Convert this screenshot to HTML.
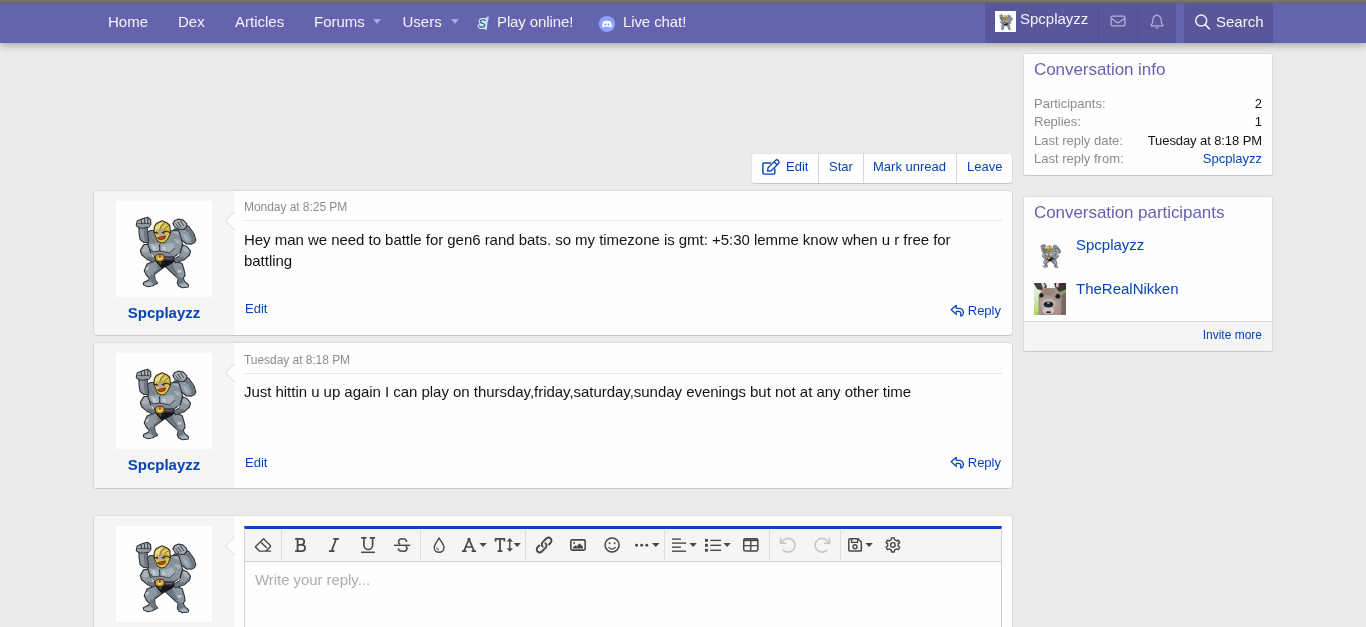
<!DOCTYPE html>
<html>
<head>
<meta charset="utf-8">
<title>Conversation</title>
<style>
*{box-sizing:border-box;margin:0;padding:0}
html,body{width:1366px;height:627px;overflow:hidden;background:#ebebeb;font-family:"Liberation Sans",sans-serif;font-size:15px;color:#141414}
a{text-decoration:none;color:#0645b8}
.abs{position:absolute}
#topline{left:0;top:0;width:1366px;height:3px;background:linear-gradient(#78746b 0,#78746b 60%,#5c5953 100%)}
#nav{left:0;top:3px;width:1366px;height:40px;background:#6463ae;box-shadow:0 2px 8px rgba(0,0,0,.32)}
.nl{position:absolute;top:0;height:40px;line-height:38px;color:#f3f3fa;font-size:15px;white-space:nowrap}
.caret{position:absolute;top:16px;width:0;height:0;border-left:4.5px solid transparent;border-right:4.5px solid transparent;border-top:5px solid #a9a8d6}
.dark{position:absolute;top:0;height:40px;background:#58579a}
.block{position:absolute;background:#fefefe;border:1px solid #d8d8d8;border-color:#dedede #d8d8d8 #c9c9c9 #d8d8d8;border-radius:3px}
.side-title{position:absolute;left:10px;font-size:17px;color:#6463ae;white-space:nowrap;letter-spacing:-0.06px}
.kv{position:absolute;left:10px;right:10px;font-size:13px;height:18px;line-height:18px;white-space:nowrap}
.kv .k{position:absolute;left:0;color:#8c8c8c}
.kv .v{position:absolute;right:0;color:#141414}
.msg{position:absolute;left:93px;width:920px;background:#fefefe;border:1px solid #d8d8d8;border-color:#dcdcdc #d8d8d8 #cacaca #d8d8d8;border-radius:4px;overflow:hidden}
.msg .user{position:absolute;left:0;top:0;bottom:0;width:140px;background:#f5f5f5}
.msg .av{position:absolute;left:22px;top:10px;width:96px;height:96px;background:#fefefe}
.msg .uname{position:absolute;left:0;width:140px;top:112px;text-align:center;font-weight:bold;font-size:15px;color:#0645b8;line-height:20px}
.msg .date{position:absolute;left:150px;top:8px;font-size:12px;color:#8c8c8c;line-height:16px;white-space:nowrap;letter-spacing:-0.05px}
.msg .hr{position:absolute;left:150px;right:10px;top:29px;height:1px;background:#e7e7e7}
.msg .body{position:absolute;left:150px;top:38px;width:740px;font-size:15px;line-height:21px;color:#141414;letter-spacing:-0.033px}
.msg .act{position:absolute;font-size:13px;color:#0645b8;line-height:18px;white-space:nowrap}
.arrow{position:absolute;left:131px;top:20px;width:0;height:0;border-top:10px solid transparent;border-bottom:10px solid transparent;border-right:10px solid #d8d8d8}
.arrow:after{content:"";position:absolute;left:1px;top:-9px;border-top:9px solid transparent;border-bottom:9px solid transparent;border-right:9px solid #fefefe}
.ricon{position:absolute;right:47px;width:15px;height:13px}
</style>
</head>
<body>
<div id="wrap" style="position:absolute;left:0;top:0;width:1366px;height:627px;will-change:transform;overflow:hidden">
<svg width="0" height="0" style="position:absolute"><defs><symbol id="mc" viewBox="0 0 96 96"><rect width="96" height="96" fill="#fefefe"/><polygon points="23.0,26.7 31.1,26.1 31.9,31.5 34.0,29.9 37.8,32.1 33.3,41.1 27.6,41.4 24.1,38.5 23.1,32.1" fill="#8d979f" stroke="#2b2e34" stroke-width="1.1" stroke-linejoin="round"/><polygon points="27.6,27.7 31.1,26.7 31.7,31.8 34.0,30.5 36.8,32.5 33.0,40.4 28.8,40.4 28.2,34.1" fill="#6c747d" stroke="none" stroke-width="0" stroke-linejoin="round"/><polygon points="58.8,28.0 68.4,28.3 71.3,24.8 73.0,25.8 78.0,32.8 79.9,39.2 78.3,41.8 75.4,43.1 70.3,43.0 65.2,38.5 62.7,34.1 56.3,30.2" fill="#8d979f" stroke="#2b2e34" stroke-width="1.1" stroke-linejoin="round"/><polygon points="69.1,29.0 72.2,26.4 77.7,33.1 79.4,39.2 78.0,41.4 75.4,42.5 75.4,37.3 72.9,32.1" fill="#6c747d" stroke="none" stroke-width="0" stroke-linejoin="round"/><polygon points="66.5,32.1 70.3,34.1 72.9,38.5 71.6,41.1 68.4,37.3" fill="#a6b1b9" stroke="none" stroke-width="0" stroke-linejoin="round"/><polygon points="20.2,24.5 21.2,20.0 26.3,17.8 31.4,16.2 34.6,18.7 34.9,23.2 32.7,26.1 27.6,26.9 23.1,26.7" fill="#a6b1b9" stroke="#2b2e34" stroke-width="1.1" stroke-linejoin="round"/><polygon points="21.8,23.8 27.6,22.6 34.0,23.2 32.6,25.8 27.6,26.5 23.4,26.3" fill="#8d979f" stroke="none" stroke-width="0" stroke-linejoin="round"/><polyline points="25.0,18.7 25.7,22.6" fill="none" stroke="#2b2e34" stroke-width="0.9" stroke-linecap="round" stroke-linejoin="round"/><polyline points="28.5,17.8 28.8,22.6" fill="none" stroke="#2b2e34" stroke-width="0.9" stroke-linecap="round" stroke-linejoin="round"/><polyline points="31.7,17.8 31.7,22.6" fill="none" stroke="#2b2e34" stroke-width="0.9" stroke-linecap="round" stroke-linejoin="round"/><polyline points="21.8,22.6 34.0,22.3" fill="none" stroke="#2b2e34" stroke-width="0.7" stroke-linecap="round" stroke-linejoin="round"/><polygon points="56.9,22.6 58.8,19.4 62.7,18.1 67.1,19.1 70.6,22.6 71.0,25.1 68.4,28.0 63.9,28.3 59.5,27.0" fill="#a6b1b9" stroke="#2b2e34" stroke-width="1.1" stroke-linejoin="round"/><polygon points="57.9,23.8 62.7,25.8 68.4,27.4 64.1,28.1 59.8,26.7" fill="#8d979f" stroke="none" stroke-width="0" stroke-linejoin="round"/><polyline points="62.0,21.3 65.2,25.8" fill="none" stroke="#2b2e34" stroke-width="0.9" stroke-linecap="round" stroke-linejoin="round"/><polyline points="64.6,20.3 67.8,24.8" fill="none" stroke="#2b2e34" stroke-width="0.9" stroke-linecap="round" stroke-linejoin="round"/><polyline points="59.8,22.6 62.7,26.7" fill="none" stroke="#2b2e34" stroke-width="0.7" stroke-linecap="round" stroke-linejoin="round"/><polygon points="39.7,59.5 46.1,67.5 38.5,73.3 39.2,79.0 41.7,82.1 36.6,84.7 31.5,85.7 27.6,83.8 27.3,81.7 32.6,79.1 33.3,77.1 30.6,74.5 28.2,69.7 31.1,62.9" fill="#8d979f" stroke="#2b2e34" stroke-width="1.1" stroke-linejoin="round"/><polygon points="34.0,73.6 38.3,73.6 38.9,79.0 41.3,81.9 37.1,83.8 34.3,79.0 34.0,76.4" fill="#6c747d" stroke="none" stroke-width="0" stroke-linejoin="round"/><polygon points="29.8,66.5 33.0,65.7 32.6,68.1 29.5,69.4" fill="#c4cfd7" stroke="none" stroke-width="0" stroke-linejoin="round"/><polygon points="39.1,61.8 45.1,67.5 39.1,72.3 37.1,72.0 42.3,67.5" fill="#6c747d" stroke="none" stroke-width="0" stroke-linejoin="round"/><polygon points="27.9,81.9 32.7,80.9 37.1,82.2 36.2,84.2 31.5,85.2 28.1,83.6" fill="#a6b1b9" stroke="none" stroke-width="0" stroke-linejoin="round"/><polygon points="58.2,59.5 66.2,62.7 68.4,70.1 69.1,74.5 67.3,77.1 68.5,80.4 72.6,84.0 72.1,86.0 66.6,86.7 62.8,84.9 61.3,82.2 62.2,77.4 58.8,74.5 49.3,65.7 56.3,61.8" fill="#8d979f" stroke="#2b2e34" stroke-width="1.1" stroke-linejoin="round"/><polygon points="59.8,74.8 66.8,77.2 68.1,80.4 63.9,83.5 61.8,82.1 62.5,77.6" fill="#6c747d" stroke="none" stroke-width="0" stroke-linejoin="round"/><polygon points="61.7,69.3 65.4,69.3 65.4,71.5 61.7,71.5" fill="#c4cfd7" stroke="none" stroke-width="0" stroke-linejoin="round"/><polygon points="50.5,65.7 56.3,62.7 58.8,68.1 62.7,74.5 59.5,74.2" fill="#6c747d" stroke="none" stroke-width="0" stroke-linejoin="round"/><polygon points="63.9,83.8 68.4,82.2 72.1,84.2 71.7,85.6 66.8,86.2" fill="#a6b1b9" stroke="none" stroke-width="0" stroke-linejoin="round"/><polygon points="31.7,31.6 34.0,29.7 38.4,29.3 54.4,30.1 56.3,29.7 62.7,29.7 65.5,38.5 66.5,43.8 63.9,52.1 58.8,55.3 57.6,58.1 39.7,58.1 38.4,55.3 34.6,51.4 31.4,43.8 32.8,41.1" fill="#8d979f" stroke="#2b2e34" stroke-width="1.1" stroke-linejoin="round"/><polygon points="32.4,32.1 34.3,30.5 38.1,30.1 39.7,35.3 41.6,40.4 37.1,43.0 33.3,41.1" fill="#7b848c" stroke="none" stroke-width="0" stroke-linejoin="round"/><polygon points="54.7,32.1 58.8,30.9 62.7,31.5 64.6,38.5 62.0,38.5 56.3,39.8 51.8,38.5" fill="#858f97" stroke="none" stroke-width="0" stroke-linejoin="round"/><polygon points="56.3,30.5 62.0,30.4 63.3,34.1 58.8,32.8" fill="#a6b1b9" stroke="none" stroke-width="0" stroke-linejoin="round"/><polygon points="34.9,43.1 41.6,43.8 43.4,49.5 37.1,50.9 34.3,47.7" fill="#a6b1b9" stroke="none" stroke-width="0" stroke-linejoin="round"/><polygon points="44.8,44.4 56.3,41.8 58.8,47.0 53.7,51.5 45.4,50.3" fill="#a6b1b9" stroke="none" stroke-width="0" stroke-linejoin="round"/><polygon points="36.4,43.8 39.8,46.3 39.8,49.0 37.1,48.4" fill="#c4cfd7" stroke="none" stroke-width="0" stroke-linejoin="round"/><polygon points="46.1,45.4 48.8,46.3 50.0,49.0 46.8,48.2" fill="#c4cfd7" stroke="none" stroke-width="0" stroke-linejoin="round"/><polygon points="57.6,38.1 62.7,38.5 65.2,42.0 62.0,42.6" fill="#a6b1b9" stroke="none" stroke-width="0" stroke-linejoin="round"/><polygon points="39.4,52.2 58.3,52.2 57.6,56.5 40.0,56.5" fill="#808a92" stroke="none" stroke-width="0" stroke-linejoin="round"/><polyline points="43.5,43.8 43.8,50.1" fill="none" stroke="#2b2e34" stroke-width="0.9" stroke-linecap="round" stroke-linejoin="round"/><polyline points="34.5,47.9 37.1,51.1 43.5,50.1 45.4,50.5 53.7,51.7 58.8,47.3" fill="none" stroke="#2b2e34" stroke-width="0.8" stroke-linecap="round" stroke-linejoin="round"/><polygon points="27.6,43.8 31.7,43.1 34.7,51.4 38.5,56.0 39.7,59.1 36.5,61.1 31.4,58.6 25.5,53.5 24.3,49.5" fill="#8d979f" stroke="#2b2e34" stroke-width="1.1" stroke-linejoin="round"/><polygon points="28.2,44.7 31.1,44.1 33.0,49.5 29.5,52.1 25.7,50.1" fill="#a6b1b9" stroke="none" stroke-width="0" stroke-linejoin="round"/><polygon points="30.8,55.3 37.1,56.5 39.4,59.1 36.5,60.7 31.7,58.1" fill="#6c747d" stroke="none" stroke-width="0" stroke-linejoin="round"/><polygon points="66.5,43.8 71.0,45.7 74.5,50.1 73.5,54.0 67.8,59.1 59.5,61.8 57.6,58.6 62.7,55.3 64.1,52.1" fill="#8d979f" stroke="#2b2e34" stroke-width="1.1" stroke-linejoin="round"/><polygon points="67.5,44.7 70.6,46.3 73.6,50.3 70.3,52.1 67.1,48.9" fill="#a6b1b9" stroke="none" stroke-width="0" stroke-linejoin="round"/><polygon points="62.7,55.9 68.4,56.5 67.5,58.8 59.8,61.1 58.2,58.8" fill="#6c747d" stroke="none" stroke-width="0" stroke-linejoin="round"/><polygon points="34.8,51.8 37.1,56.0 38.2,55.3 35.5,52.1" fill="#fefefe" stroke="none" stroke-width="0" stroke-linejoin="round"/><polygon points="64.1,52.3 62.7,55.1 61.5,54.7 63.0,52.4" fill="#fefefe" stroke="none" stroke-width="0" stroke-linejoin="round"/><polygon points="39.7,59.2 58.2,59.2 56.3,61.8 49.3,65.7 46.1,67.5 42.9,63.8" fill="#15151a" stroke="#15151a" stroke-width="0.8" stroke-linejoin="round"/><polygon points="42.1,61.1 46.2,61.1 44.5,64.1" fill="#514a66" stroke="none" stroke-width="0" stroke-linejoin="round"/><polygon points="39.4,55.8 57.6,55.8 57.2,59.1 39.7,59.1" fill="#1b1b20" stroke="#1b1b20" stroke-width="0.6" stroke-linejoin="round"/><polygon points="48.6,56.3 57.1,56.3 56.8,58.7 48.6,58.7" fill="#4a4560" stroke="none" stroke-width="0" stroke-linejoin="round"/><ellipse cx="50.1" cy="57.5" rx="0.4" ry="0.4" fill="#d8c050" stroke="none" stroke-width="0"/><ellipse cx="52.0" cy="57.5" rx="0.4" ry="0.4" fill="#d8c050" stroke="none" stroke-width="0"/><ellipse cx="53.9" cy="57.5" rx="0.4" ry="0.4" fill="#d8c050" stroke="none" stroke-width="0"/><ellipse cx="55.8" cy="57.5" rx="0.4" ry="0.4" fill="#d8c050" stroke="none" stroke-width="0"/><ellipse cx="43.8" cy="56.8" rx="4.5" ry="3.6" fill="#d6b93f" stroke="#3e300c" stroke-width="1.0"/><ellipse cx="43.8" cy="57.2" rx="2.6" ry="2.0" fill="#f0dc78" stroke="#a08420" stroke-width="0.6"/><polygon points="43.0,53.5 44.8,53.5 44.7,57.0 43.1,57.0" fill="#e03228" stroke="none" stroke-width="0" stroke-linejoin="round"/><polygon points="37.9,31.5 38.3,25.8 40.3,22.6 46.1,19.8 51.2,21.9 53.9,24.5 54.2,29.6 54.5,32.1 51.8,37.4 48.8,41.1 45.4,42.0 41.6,39.9 39.6,34.7" fill="#c6af42" stroke="#3a3214" stroke-width="1.1" stroke-linejoin="round"/><polygon points="39.1,30.9 39.4,25.8 41.6,23.2 46.1,20.8 48.0,21.6 44.8,24.5 43.2,29.6 41.3,27.7 40.0,30.9" fill="#e8db86" stroke="none" stroke-width="0" stroke-linejoin="round"/><polygon points="46.1,25.8 49.9,23.2 53.0,25.1 53.2,30.2 51.2,27.7 48.6,30.2" fill="#dccb66" stroke="none" stroke-width="0" stroke-linejoin="round"/><polyline points="43.5,31.2 44.5,25.8 48.0,21.9" fill="none" stroke="#6e6024" stroke-width="0.8" stroke-linecap="round" stroke-linejoin="round"/><polyline points="48.0,31.2 49.3,26.7 52.8,24.8" fill="none" stroke="#6e6024" stroke-width="0.8" stroke-linecap="round" stroke-linejoin="round"/><polygon points="41.1,30.1 46.6,30.1 51.2,32.1 48.0,33.5 43.5,34.6 40.8,33.5" fill="#a1abb3" stroke="none" stroke-width="0" stroke-linejoin="round"/><polygon points="38.7,32.1 41.0,34.1 43.5,35.0 48.0,34.1 53.7,32.1 51.7,37.1 48.8,40.7 45.4,41.6 41.9,39.5 39.8,34.6" fill="#d9c84c" stroke="none" stroke-width="0" stroke-linejoin="round"/><polygon points="41.7,36.7 49.4,34.8 48.8,37.6 44.8,38.7 42.5,38.1" fill="#e83a2c" stroke="#45200e" stroke-width="0.8" stroke-linejoin="round"/><ellipse cx="40.3" cy="31.6" rx="1.1" ry="1.1" fill="#d81e1e" stroke="none" stroke-width="0"/><ellipse cx="47.6" cy="31.9" rx="1.2" ry="1.1" fill="#d81e1e" stroke="none" stroke-width="0"/><polyline points="38.3,31.4 41.7,32.1" fill="none" stroke="#2a2410" stroke-width="1.0" stroke-linecap="round" stroke-linejoin="round"/><polyline points="46.1,31.5 51.2,30.1 53.7,31.6" fill="none" stroke="#2a2410" stroke-width="1.0" stroke-linecap="round" stroke-linejoin="round"/></symbol>
<symbol id="rep" viewBox="0 0 15 13"><path d="M1.2 5.8 L6.2 1.3 V4.4 H8.6 C11.4 4.4 13.4 6 13.4 8.4 C13.4 10 12.4 11.3 11.4 12 C10.8 12.3 10.3 11.7 10.6 11.2 C11.4 9 10.6 7.3 8.2 7.3 H6.2 V10.4 Z" fill="none" stroke="#0645b8" stroke-width="1.25" stroke-linejoin="round"/></symbol>
</defs></svg>
<div class="abs" id="nav">
  <a class="nl" style="left:108px">Home</a>
  <a class="nl" style="left:178px">Dex</a>
  <a class="nl" style="left:235px">Articles</a>
  <a class="nl" style="left:314px">Forums</a><i class="caret" style="left:373px"></i>
  <a class="nl" style="left:402.5px">Users</a><i class="caret" style="left:451px"></i>
  <a class="nl" style="left:497px;letter-spacing:-0.11px">Play online!</a>
  <a class="nl" style="left:623px;letter-spacing:-0.1px">Live chat!</a>
  <!-- PS icon -->
  <svg class="abs" style="left:476px;top:11px" width="16" height="18" viewBox="0 0 16 18"><polygon points="10,3 13,2.6 11.6,9 10.8,16 8,15.6" fill="#b4d8e8"/><text x="2.3" y="14.4" textLength="8" lengthAdjust="spacingAndGlyphs" font-family="Liberation Sans" font-weight="bold" font-style="italic" font-size="13.5" fill="#2a78b2" stroke="#fdfdfd" stroke-width="1.9" paint-order="stroke" stroke-linejoin="round">S</text></svg>
  <!-- discord -->
  <svg class="abs" style="left:598px;top:12px" width="18" height="18" viewBox="0 0 18 18"><circle cx="9" cy="9" r="8.1" fill="#8ea1fb"/><path d="M5.3 6.4 Q9 5.2 12.7 6.4 Q14.2 9 14 11.8 Q12.8 12.7 11.6 12.6 L11 11.6 Q9 12.1 7 11.6 L6.4 12.6 Q5.2 12.7 4 11.8 Q3.8 9 5.3 6.4Z" fill="#fcfcff"/><circle cx="7.5" cy="9.4" r="0.9" fill="#7289f0"/><circle cx="10.5" cy="9.4" r="0.9" fill="#7289f0"/></svg>
  <div class="dark" style="left:985px;width:191px"></div>
  <i class="abs" style="left:1098px;top:0;width:1px;height:40px;background:#515090"></i>
  <i class="abs" style="left:1137px;top:0;width:1px;height:40px;background:#515090"></i>
  <div class="dark" style="left:1184px;width:89px;border-radius:4px 4px 0 0"></div>
  <svg class="abs" style="left:995px;top:8px" width="21" height="21"><use href="#mc"/></svg>
  <a class="nl" style="left:1020px;top:-3px">Spcplayzz</a>
  <!-- envelope -->
  <svg class="abs" style="left:1109px;top:11px" width="18" height="14" viewBox="0 0 18 14"><rect x="2.1" y="2.1" width="13.8" height="9.8" rx="1.4" fill="none" stroke="#b1b0d8" stroke-width="1.3"/><path d="M2.3 4.2 L8 8.4 Q9 9 10 8.4 L15.7 4.2" fill="none" stroke="#b1b0d8" stroke-width="1.3"/></svg>
  <!-- bell -->
  <svg class="abs" style="left:1149px;top:10px" width="16" height="17" viewBox="0 0 16 17"><path d="M8 1.2 V2.4 M8 2.4 C5.2 2.4 3.9 4.6 3.9 7 C3.9 9.6 3.2 10.8 2.2 11.9 C1.9 12.3 2.1 12.8 2.6 12.8 H13.4 C13.9 12.8 14.1 12.3 13.8 11.9 C12.8 10.8 12.1 9.6 12.1 7 C12.1 4.6 10.8 2.4 8 2.4 Z" fill="none" stroke="#b1b0d8" stroke-width="1.3" stroke-linejoin="round"/><path d="M6.3 14.2 A1.8 1.8 0 0 0 9.7 14.2 Z" fill="#b1b0d8"/></svg>
  <!-- search -->
  <svg class="abs" style="left:1194px;top:10px" width="18" height="18" viewBox="0 0 18 18"><circle cx="7.2" cy="7.6" r="5.5" fill="none" stroke="#f3f3fa" stroke-width="1.5"/><path d="M11.2 11.6 L15.6 16" stroke="#f3f3fa" stroke-width="1.6" stroke-linecap="round"/></svg>
  <a class="nl" style="left:1216px">Search</a>
</div>
<div class="abs" id="topline"></div>

<!-- sidebar -->
<div class="block" style="left:1023px;top:53px;width:250px;height:123px">
  <div class="side-title" style="top:6px">Conversation info</div>
  <div class="kv" style="top:41px"><span class="k">Participants:</span><span class="v">2</span></div>
  <div class="kv" style="top:59px"><span class="k">Replies:</span><span class="v">1</span></div>
  <div class="kv" style="top:78px"><span class="k">Last reply date:</span><span class="v" style="letter-spacing:-0.09px">Tuesday at 8:18 PM</span></div>
  <div class="kv" style="top:96px"><span class="k">Last reply from:</span><span class="v" style="color:#0645b8">Spcplayzz</span></div>
</div>
<div class="block" style="left:1023px;top:196px;width:250px;height:156px;overflow:hidden">
  <div class="side-title" style="top:6px">Conversation participants</div>
  <svg class="abs" style="left:10px;top:42px" width="32" height="32"><use href="#mc"/></svg>
  <a class="abs" style="left:52px;top:38px;font-size:15px;line-height:20px">Spcplayzz</a>
  <svg class="abs" style="left:10px;top:86px" width="32" height="32" viewBox="0 0 32 32"><defs><filter id="bl" x="-10%" y="-10%" width="120%" height="120%"><feGaussianBlur stdDeviation="0.55"/></filter><clipPath id="cp"><rect width="32" height="32"/></clipPath><linearGradient id="gg" x1="0" y1="0" x2="0" y2="1"><stop offset="0" stop-color="#eef2ee"/><stop offset="0.35" stop-color="#dcead0"/><stop offset="0.7" stop-color="#c8e494"/><stop offset="1" stop-color="#a2d456"/></linearGradient></defs><g clip-path="url(#cp)"><rect width="32" height="32" fill="url(#gg)"/><g filter="url(#bl)"><rect x="10" y="-2" width="12" height="8" fill="#f6f8f6"/><polygon points="24,8 33,5 33,33 24,33" fill="#8a9a6a"/><polygon points="27,12 33,9 33,33 26,33" fill="#7a6a62"/><polygon points="-1,-1 11,-1 13,4 9,8 3,6" fill="#4c3e3a"/><polygon points="20,-1 33,-1 33,6 25,9 21,4" fill="#3c302e"/><polygon points="7,0 10,0 11,3.5 9,5.5" fill="#d8d0c8"/><polygon points="22,0 25,0 24.5,4.5 22,4" fill="#c8beb6"/><polygon points="9,5 22,5 27.5,12 27,33 4.5,33 4.5,13" fill="#a49188"/><ellipse cx="15" cy="9" rx="6" ry="3.5" fill="#96847a"/><ellipse cx="9" cy="20" rx="3" ry="6" fill="#b3a39a"/><ellipse cx="22" cy="21" rx="3" ry="6" fill="#ac9c94"/><ellipse cx="15" cy="16" rx="4.5" ry="3" fill="#aa9c9a"/><ellipse cx="14.8" cy="21" rx="6.5" ry="5" fill="#c2bab2"/><ellipse cx="14.5" cy="27.5" rx="6" ry="3.5" fill="#cfc7bf"/><ellipse cx="14.5" cy="21.6" rx="4.8" ry="3" fill="#1c2434"/><ellipse cx="14.5" cy="19.6" rx="1.6" ry="1.6" fill="#8a8480"/><ellipse cx="7.4" cy="12.3" rx="2.4" ry="2.5" fill="#5a4a44"/><ellipse cx="23.8" cy="13.2" rx="2.6" ry="2.6" fill="#5a4a44"/><circle cx="7.4" cy="12.4" r="1.7" fill="#0e1a26"/><circle cx="23.8" cy="13.3" r="1.9" fill="#0e1a26"/><ellipse cx="14.5" cy="29.3" rx="2.6" ry="1" fill="#3a2a26"/></g></g></svg>
  <a class="abs" style="left:52px;top:82px;font-size:15px;line-height:20px">TheRealNikken</a>
  <div class="abs" style="left:0;right:0;top:124px;height:31px;background:#f5f5f5;border-top:1px solid #dfdfdf"></div>
  <a class="abs" style="right:10px;top:129px;font-size:12px;line-height:18px">Invite more</a>
</div>

<!-- button group -->
<div class="block" style="left:751px;top:153px;width:262px;height:31px;border-color:#e6e6e6 #dadada #c9c9c9 #e2e2e2;border-radius:4px">
  <svg class="abs" style="left:9px;top:4px" width="20" height="20" viewBox="761 158 20 20"><path d="M771 162.9 H764 Q762.9 162.9 762.9 164 V173 Q762.9 174.1 764 174.1 H773.7 Q774.8 174.1 774.8 173 V168.6" fill="none" stroke="#0645b8" stroke-width="1.45"/><path d="M767.5 171 L768.1 167.7 L775.4 160.4 A2.2 2.2 0 0 1 778.5 163.5 L771.2 170.8 Z M774.1 161.7 L777.2 164.8" fill="#fefefe" stroke="#0645b8" stroke-width="1.3" stroke-linejoin="round"/></svg>
  <a class="abs" style="left:34px;top:4px;font-size:13px;line-height:18px">Edit</a>
  <a class="abs" style="left:77px;top:4px;font-size:13px;line-height:18px">Star</a>
  <a class="abs" style="left:121px;top:4px;font-size:13px;line-height:18px">Mark unread</a>
  <a class="abs" style="left:215px;top:4px;font-size:13px;line-height:18px">Leave</a>
  <i class="abs" style="left:66px;top:0;width:1px;height:29px;background:#d8d8d8"></i>
  <i class="abs" style="left:111px;top:0;width:1px;height:29px;background:#d8d8d8"></i>
  <i class="abs" style="left:204px;top:0;width:1px;height:29px;background:#d8d8d8"></i>
</div>

<!-- message 1 -->
<div class="msg" style="top:190px;height:146px">
  <div class="user"><div class="av"><svg width="96" height="96"><use href="#mc"/></svg></div><div class="uname">Spcplayzz</div></div>
  <i class="arrow"></i>
  <div class="date">Monday at 8:25 PM</div><div class="hr"></div>
  <div class="body">Hey man we need to battle for gen6 rand bats. so my timezone is gmt: +5:30 lemme know when u r free for battling</div>
  <a class="act" style="left:151px;top:109px">Edit</a>
  <svg class="ricon" style="top:113px"><use href="#rep"/></svg>
  <a class="act" style="right:11px;top:111px">Reply</a>
</div>
<!-- message 2 -->
<div class="msg" style="top:342px;height:147px">
  <div class="user"><div class="av"><svg width="96" height="96"><use href="#mc"/></svg></div><div class="uname">Spcplayzz</div></div>
  <i class="arrow"></i>
  <div class="date" style="top:9px">Tuesday at 8:18 PM</div><div class="hr" style="top:30px"></div>
  <div class="body">Just hittin u up again I can play on thursday,friday,saturday,sunday evenings but not at any other time</div>
  <a class="act" style="left:151px;top:111px">Edit</a>
  <svg class="ricon" style="top:113px"><use href="#rep"/></svg>
  <a class="act" style="right:11px;top:111px">Reply</a>
</div>
<!-- reply block -->
<div class="msg" style="top:515px;height:146px">
  <div class="user"><div class="av"><svg width="96" height="96"><use href="#mc"/></svg></div></div>
  <i class="arrow"></i>
</div>
<div class="abs" style="left:244px;top:526px;width:758px;height:140px;border:1px solid #d0d0d0;border-top:3px solid #0645b8;background:#fefefe"></div>
<div class="abs" style="left:245px;top:529px;width:756px;height:32px;background:#f5f5f5"></div>
<div class="abs" style="left:245px;top:561px;width:756px;height:1px;background:#d0d0d0"></div>
<div class="abs" style="left:255px;top:570px;font-size:15px;color:#adadad;line-height:20px;white-space:nowrap;letter-spacing:-0.06px">Write your reply...</div>
<svg class="abs" style="left:244px;top:529px" width="758" height="32" viewBox="244 529 758 32"><rect x="281" y="530" width="1" height="30" fill="#dcdcdc"/><rect x="420" y="530" width="1" height="30" fill="#dcdcdc"/><rect x="525" y="530" width="1" height="30" fill="#dcdcdc"/><rect x="664" y="530" width="1" height="30" fill="#dcdcdc"/><rect x="769" y="530" width="1" height="30" fill="#dcdcdc"/><rect x="840" y="530" width="1" height="30" fill="#dcdcdc"/><path d="M263.6 538.8 L270.3 545.4 Q270.9 546.1 270.3 546.8 L266 551.1 H259.4 L255.9 547.6 Q255.2 546.9 255.9 546.2 Z M261.2 542.4 L266.9 548 M266 551.1 H271.2" fill="none" stroke="#484848" stroke-width="1.4" stroke-linecap="butt" stroke-linejoin="round" /><path d="M295.1 538.8 H301.2 A3 3 0 0 1 301.2 544.8 H297.6 M301.9 544.8 A3.15 3.15 0 0 1 301.9 551.1 H295.1 M297.6 538.8 V551.1" fill="none" stroke="#484848" stroke-width="1.8" stroke-linecap="butt" stroke-linejoin="round" /><path d="M333.3 538.8 H338.9 M328.9 551.1 H334.5 M336.2 538.8 L331.6 551.1" fill="none" stroke="#484848" stroke-width="1.65" stroke-linecap="butt" stroke-linejoin="round" /><path d="M361.2 537.9 H366.4 M369.8 537.9 H375 M363.9 537.9 V545 A4.35 4.5 0 0 0 372.6 545 V537.9" fill="none" stroke="#484848" stroke-width="1.65" stroke-linecap="butt" stroke-linejoin="round" /><path d="M361 552.3 H375" fill="none" stroke="#484848" stroke-width="1.5" stroke-linecap="butt" stroke-linejoin="round" /><path d="M406.6 541.8 C406.4 539.8 404.8 538.8 402.6 538.8 C400 538.8 398.6 540.1 398.6 541.9 C398.6 543 399.2 543.8 400.2 544.4 M398.2 548.4 C398.5 550.4 400.2 551.3 402.6 551.3 C405.4 551.3 407 550 407 548.2 C407 547.2 406.5 546.6 405.6 546.1" fill="none" stroke="#484848" stroke-width="1.6" stroke-linecap="butt" stroke-linejoin="round" /><path d="M394 545.3 H410.2" fill="none" stroke="#484848" stroke-width="1.4" stroke-linecap="butt" stroke-linejoin="round" /><path d="M439.1 538 C437.6 541 434.2 544.5 434.2 547.6 A4.9 4.7 0 0 0 444 547.6 C444 544.5 440.6 541 439.1 538 Z" fill="none" stroke="#484848" stroke-width="1.4" stroke-linecap="butt" stroke-linejoin="round" /><path d="M436.7 547.4 A2.5 2.5 0 0 0 439 549.9" fill="none" stroke="#484848" stroke-width="1.0" stroke-linecap="butt" stroke-linejoin="round" /><path d="M469 539 L464 551.1 M469 539 L474 551.1 M462 551.1 H466.5 M471.6 551.1 H476.1 M465.9 547 H472.2 M467.6 538.8 H470.4" fill="none" stroke="#484848" stroke-width="1.7" stroke-linecap="butt" stroke-linejoin="round" /><polygon points="479.4,543.1 486.9,543.1 483.1,547.0" fill="#484848"/><path d="M495.6 541.6 V538.8 H504.4 V541.6 M500 538.8 V551.1 M497.6 551.1 H502.4" fill="none" stroke="#484848" stroke-width="1.8" stroke-linecap="butt" stroke-linejoin="round" /><path d="M509.8 540 V550" fill="none" stroke="#484848" stroke-width="1.4" stroke-linecap="butt" stroke-linejoin="round" /><polygon points="506.7,541.6 509.8,538 512.9,541.6" fill="#484848"/><polygon points="506.7,548.2 509.8,551.8 512.9,548.2" fill="#484848"/><polygon points="513.6,543.1 520.8,543.1 517.2,547.0" fill="#484848"/><g transform="translate(544.1 545) rotate(-45)"><path d="M-2 1 A3 3 0 0 1 1 -3 L6.2 -3 A3 3 0 0 1 6.2 3 L3 3" fill="none" stroke="#484848" stroke-width="1.9" stroke-linecap="butt" stroke-linejoin="round" /><path d="M2 -1 A3 3 0 0 1 -1 3 L-6.2 3 A3 3 0 0 1 -6.2 -3 L-3 -3" fill="none" stroke="#484848" stroke-width="1.9" stroke-linecap="butt" stroke-linejoin="round" /></g><rect x="570.8" y="539.9" width="14.4" height="10.2" rx="1.3" fill="none" stroke="#484848" stroke-width="1.6"/><polygon points="573,548.4 573,547.3 575.2,545.2 576.5,546.5 579.6,543.2 583,546.8 583,548.4" fill="#484848"/><circle cx="574.1" cy="542.9" r="1" fill="#484848"/><circle cx="612.1" cy="545" r="7" fill="none" stroke="#484848" stroke-width="1.55"/><circle cx="609.6" cy="543.2" r="0.95" fill="#484848"/><circle cx="614.6" cy="543.2" r="0.95" fill="#484848"/><path d="M608.5 547.1 Q612.1 551 615.7 547.1" fill="none" stroke="#484848" stroke-width="1.3" stroke-linecap="butt" stroke-linejoin="round" /><circle cx="636.6" cy="545.2" r="1.45" fill="#484848"/><circle cx="641.7" cy="545.2" r="1.45" fill="#484848"/><circle cx="646.8" cy="545.2" r="1.45" fill="#484848"/><polygon points="651.9,543.1 659.6,543.1 655.8,547.0" fill="#484848"/><path d="M672 539.1 H680.9" fill="none" stroke="#484848" stroke-width="1.4" stroke-linecap="butt" stroke-linejoin="round" /><path d="M672 543.1 H686.1" fill="none" stroke="#484848" stroke-width="1.4" stroke-linecap="butt" stroke-linejoin="round" /><path d="M672 547.2 H680.9" fill="none" stroke="#484848" stroke-width="1.4" stroke-linecap="butt" stroke-linejoin="round" /><path d="M672 551.2 H686.1" fill="none" stroke="#484848" stroke-width="1.4" stroke-linecap="butt" stroke-linejoin="round" /><polygon points="689.4,543.1 696.9,543.1 693.1,547.0" fill="#484848"/><rect x="705" y="538.9" width="2.9" height="2.9" fill="#484848"/><path d="M710.3 540.4 H721.1" fill="none" stroke="#484848" stroke-width="1.4" stroke-linecap="butt" stroke-linejoin="round" /><rect x="705" y="543.8" width="2.9" height="2.9" fill="#484848"/><path d="M710.3 545.3 H721.1" fill="none" stroke="#484848" stroke-width="1.4" stroke-linecap="butt" stroke-linejoin="round" /><rect x="705" y="548.8" width="2.9" height="2.9" fill="#484848"/><path d="M710.3 550.3 H721.1" fill="none" stroke="#484848" stroke-width="1.4" stroke-linecap="butt" stroke-linejoin="round" /><polygon points="723.4,543.1 730.8,543.1 727.1,547.0" fill="#484848"/><rect x="743.75" y="538.75" width="14.1" height="12.3" rx="1.5" fill="none" stroke="#484848" stroke-width="1.5"/><path d="M743.8 540.2 H757.8" fill="none" stroke="#484848" stroke-width="2.0" stroke-linecap="butt" stroke-linejoin="round" /><path d="M750.8 540 V551 M743.8 545.6 H757.8" fill="none" stroke="#484848" stroke-width="1.4" stroke-linecap="butt" stroke-linejoin="round" /><path d="M781.7 542.7 A6.9 6.9 0 1 1 782.9 549.8" fill="none" stroke="#c5c5c5" stroke-width="1.65" stroke-linecap="butt" stroke-linejoin="round" /><path d="M780.6 537.7 V543.2 H786.2" fill="none" stroke="#c5c5c5" stroke-width="1.65" stroke-linecap="butt" stroke-linejoin="round" /><path d="M828.4 542.7 A6.9 6.9 0 1 0 827.2 549.8" fill="none" stroke="#c5c5c5" stroke-width="1.65" stroke-linecap="butt" stroke-linejoin="round" /><path d="M829.5 537.7 V543.2 H823.9" fill="none" stroke="#c5c5c5" stroke-width="1.65" stroke-linecap="butt" stroke-linejoin="round" /><path d="M849.9 538.8 H858 L861.3 542 V550 Q861.3 551.1 860.2 551.1 H849.9 Q848.8 551.1 848.8 550 V539.9 Q848.8 538.8 849.9 538.8Z" fill="none" stroke="#484848" stroke-width="1.5" stroke-linecap="butt" stroke-linejoin="round" /><path d="M851.6 538.8 V542.4 H857.6 V538.8" fill="none" stroke="#484848" stroke-width="1.4" stroke-linecap="butt" stroke-linejoin="round" /><circle cx="855" cy="546.8" r="2.0" fill="none" stroke="#484848" stroke-width="1.4"/><polygon points="865.3,543.1 872.9,543.1 869.1,547.0" fill="#484848"/><path d="M891.32 539.74 L891.53 537.83 L894.27 537.83 L894.48 539.74 L896.58 540.95 L898.33 540.18 L899.71 542.56 L898.16 543.69 L898.16 546.11 L899.71 547.24 L898.33 549.62 L896.58 548.85 L894.48 550.06 L894.27 551.97 L891.53 551.97 L891.32 550.06 L889.22 548.85 L887.47 549.62 L886.09 547.24 L887.64 546.11 L887.64 543.69 L886.09 542.56 L887.47 540.18 L889.22 540.95Z" fill="none" stroke="#484848" stroke-width="1.4" stroke-linecap="butt" stroke-linejoin="round" /><circle cx="892.9" cy="544.9" r="2.3" fill="none" stroke="#484848" stroke-width="1.4"/></svg>
</div>
</body>
</html>
